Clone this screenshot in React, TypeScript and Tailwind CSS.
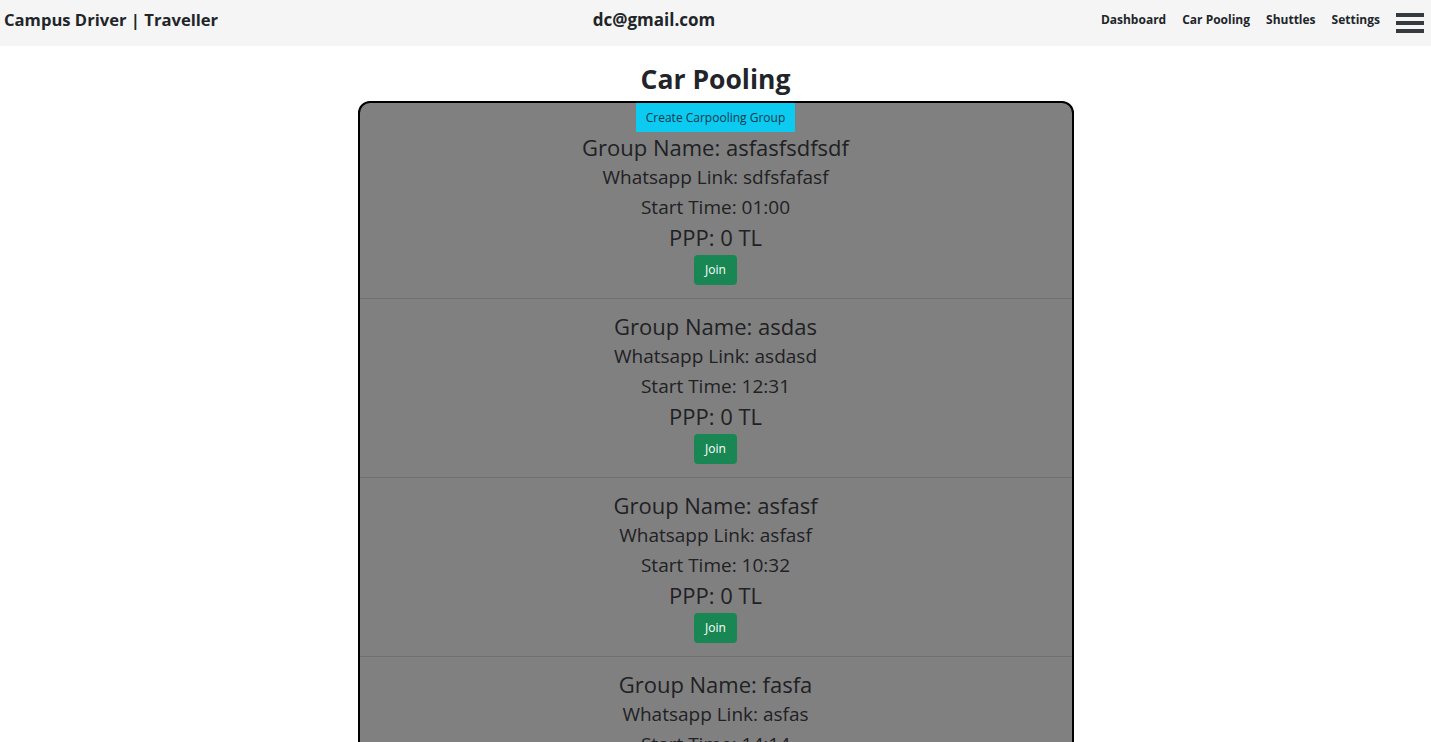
const groups = [
  { name: 'asfasfsdfsdf', link: 'sdfsfafasf', time: '01:00', ppp: 0 },
  { name: 'asdas', link: 'asdasd', time: '12:31', ppp: 0 },
  { name: 'asfasf', link: 'asfasf', time: '10:32', ppp: 0 },
  { name: 'fasfa', link: 'asfas', time: '14:14', ppp: 0 },
];

function Navbar() {
  return (
    <nav className="h-[46px] bg-[#f5f5f5] flex items-center pl-1 pr-[7px] pb-1.5 text-[#212529] font-bold">
      <div className="flex-1 text-[16.6px]">Campus Driver | Traveller</div>
      <div className="text-[17px] -ml-[120px]">dc@gmail.com</div>
      <div className="flex-1 flex items-center justify-end gap-4 text-[12px]">
        <a href="#">Dashboard</a>
        <a href="#">Car Pooling</a>
        <a href="#">Shuttles</a>
        <a href="#">Settings</a>
        <button className="flex flex-col gap-1 w-7 mt-1.5">
          <span className="block h-1 bg-[#343a40]" />
          <span className="block h-1 bg-[#343a40]" />
          <span className="block h-1 bg-[#343a40]" />
        </button>
      </div>
    </nav>
  );
}

export default function App() {
  return (
    <div className="min-h-screen bg-white font-['Open_Sans',sans-serif]">
      <Navbar />
      <main className="flex flex-col items-center">
        <h1 className="mt-[13px] text-[26.5px] leading-[40px] font-bold text-[#212529]">Car Pooling</h1>
        <div className="mt-[2px] w-[716px] border-2 border-black rounded-xl bg-[#808080] flex flex-col items-center overflow-hidden">
          <button className="h-[29px] px-[10px] bg-[#0dcaf0] text-[#12394a] text-[12px]">
            Create Carpooling Group
          </button>
          {groups.map((g, i) => (
            <div
              key={i}
              className={`w-full flex flex-col items-center text-[#1f2124] pb-[13px] ${
                i === 0 ? 'pt-0' : 'pt-3 border-t border-[#707070]'
              }`}
            >
              <div className="text-[22px] leading-[30px]">Group Name: {g.name}</div>
              <div className="text-[19px] leading-[30px]">Whatsapp Link: {g.link}</div>
              <div className="text-[19px] leading-[30px]">Start Time: {g.time}</div>
              <div className="text-[22px] leading-[30px]">PPP: {g.ppp} TL</div>
              <button className="mt-[3px] h-[30px] px-[11.5px] bg-[#198754] text-white text-[12px] rounded-sm">
                Join
              </button>
            </div>
          ))}
        </div>
      </main>
    </div>
  );
}
